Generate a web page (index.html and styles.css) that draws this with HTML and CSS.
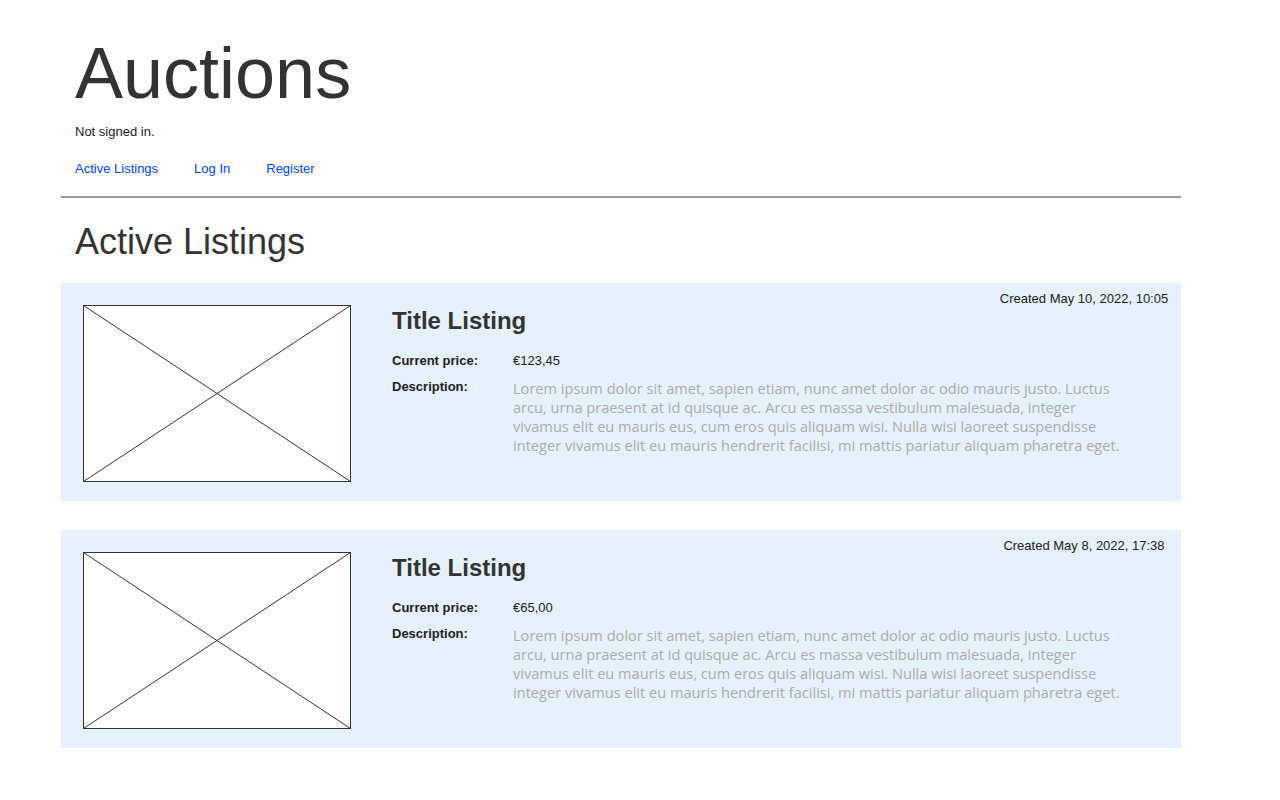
FILE: index.html
```html
<!DOCTYPE html>
<html lang="en">
<head>
<meta charset="utf-8">
<title>Auctions</title>
<link rel="stylesheet" href="styles.css">
</head>
<body>
<div class="page">
  <header class="header">
    <h1 class="site-title">Auctions</h1>
    <div class="status">Not signed in.</div>
    <nav class="nav">
      <a href="#" class="nav-link">Active Listings</a>
      <a href="#" class="nav-link">Log In</a>
      <a href="#" class="nav-link">Register</a>
    </nav>
  </header>
  <hr class="divider">
  <h2 class="page-title">Active Listings</h2>

  <div class="listings">
    <article class="card">
      <div class="thumb">
        <svg viewBox="0 0 268 177" width="268" height="177" preserveAspectRatio="none">
          <rect x="0.5" y="0.5" width="267" height="176" fill="#fff" stroke="#333" stroke-width="1"/>
          <line x1="0.5" y1="0.5" x2="267.5" y2="176.5" stroke="#333" stroke-width="1"/>
          <line x1="267.5" y1="0.5" x2="0.5" y2="176.5" stroke="#333" stroke-width="1"/>
        </svg>
      </div>
      <div class="info">
        <h3 class="card-title">Title Listing</h3>
        <div class="fields">
          <div class="label">Current price:</div>
          <div class="price">€123,45</div>
          <div class="label">Description:</div>
          <div class="desc">Lorem ipsum dolor sit amet, sapien etiam, nunc amet dolor ac odio mauris justo. Luctus arcu, urna praesent at id quisque ac. Arcu es massa vestibulum malesuada, integer vivamus elit eu mauris eus, cum eros quis aliquam wisi. Nulla wisi laoreet suspendisse integer vivamus elit eu mauris hendrerit facilisi, mi mattis pariatur aliquam pharetra eget.</div>
        </div>
      </div>
      <div class="created">Created May 10, 2022, 10:05</div>
    </article>

    <article class="card">
      <div class="thumb">
        <svg viewBox="0 0 268 177" width="268" height="177" preserveAspectRatio="none">
          <rect x="0.5" y="0.5" width="267" height="176" fill="#fff" stroke="#333" stroke-width="1"/>
          <line x1="0.5" y1="0.5" x2="267.5" y2="176.5" stroke="#333" stroke-width="1"/>
          <line x1="267.5" y1="0.5" x2="0.5" y2="176.5" stroke="#333" stroke-width="1"/>
        </svg>
      </div>
      <div class="info">
        <h3 class="card-title">Title Listing</h3>
        <div class="fields">
          <div class="label">Current price:</div>
          <div class="price">€65,00</div>
          <div class="label">Description:</div>
          <div class="desc">Lorem ipsum dolor sit amet, sapien etiam, nunc amet dolor ac odio mauris justo. Luctus arcu, urna praesent at id quisque ac. Arcu es massa vestibulum malesuada, integer vivamus elit eu mauris eus, cum eros quis aliquam wisi. Nulla wisi laoreet suspendisse integer vivamus elit eu mauris hendrerit facilisi, mi mattis pariatur aliquam pharetra eget.</div>
        </div>
      </div>
      <div class="created">Created May 8, 2022, 17:38</div>
    </article>
  </div>
</div>
</body>
</html>
```

FILE: styles.css
```css
html, body {
  margin: 0;
  padding: 0;
  background: #fff;
}

body {
  font-family: "Liberation Sans", Arial, sans-serif;
  color: #222;
}

.page {
  width: 1120px;
  margin-left: 61px;
  padding-top: 37px;
}

.header {
  padding-left: 14px;
}

.site-title {
  margin: 0;
  font-size: 72px;
  line-height: 1;
  font-weight: normal;
  color: #333;
}

.status {
  margin-top: 15px;
  font-size: 13px;
  line-height: 16px;
}

.nav {
  display: flex;
  gap: 36px;
  margin-top: 21px;
}

.nav-link {
  font-size: 13px;
  line-height: 16px;
  color: #0044ff;
  text-decoration: none;
}

.divider {
  margin: 19px 0 0 0;
  border: 0;
  height: 2px;
  background: #999;
}

.page-title {
  margin: 23px 0 0 14px;
  font-size: 36px;
  line-height: 42px;
  font-weight: normal;
  color: #333;
}

.listings {
  display: flex;
  flex-direction: column;
  gap: 29px;
  margin-top: 20px;
}

.card {
  position: relative;
  display: flex;
  background: #e5f1fd;
  height: 218px;
  box-sizing: border-box;
  padding: 22px 10px 0 22px;
}

.thumb {
  width: 268px;
  height: 177px;
  flex: none;
}

.thumb svg {
  display: block;
}

.info {
  margin-left: 41px;
  padding-top: 2px;
}

.card-title {
  margin: 0;
  font-size: 24px;
  line-height: 28px;
  font-weight: bold;
  color: #333;
}

.fields {
  display: grid;
  grid-template-columns: 121px 615px;
  row-gap: 10px;
  margin-top: 18px;
}

.label {
  font-size: 13px;
  line-height: 16px;
  font-weight: bold;
  color: #222;
}

.price {
  font-size: 13px;
  line-height: 16px;
  color: #222;
}

.desc {
  font-family: "Open Sans", sans-serif;
  font-size: 14.6px;
  line-height: 19px;
  color: #acacac;
}

.created {
  position: absolute;
  top: 8px;
  right: 10px;
  width: 174px;
  text-align: center;
  font-size: 13px;
  line-height: 16px;
  color: #222;
}
```
